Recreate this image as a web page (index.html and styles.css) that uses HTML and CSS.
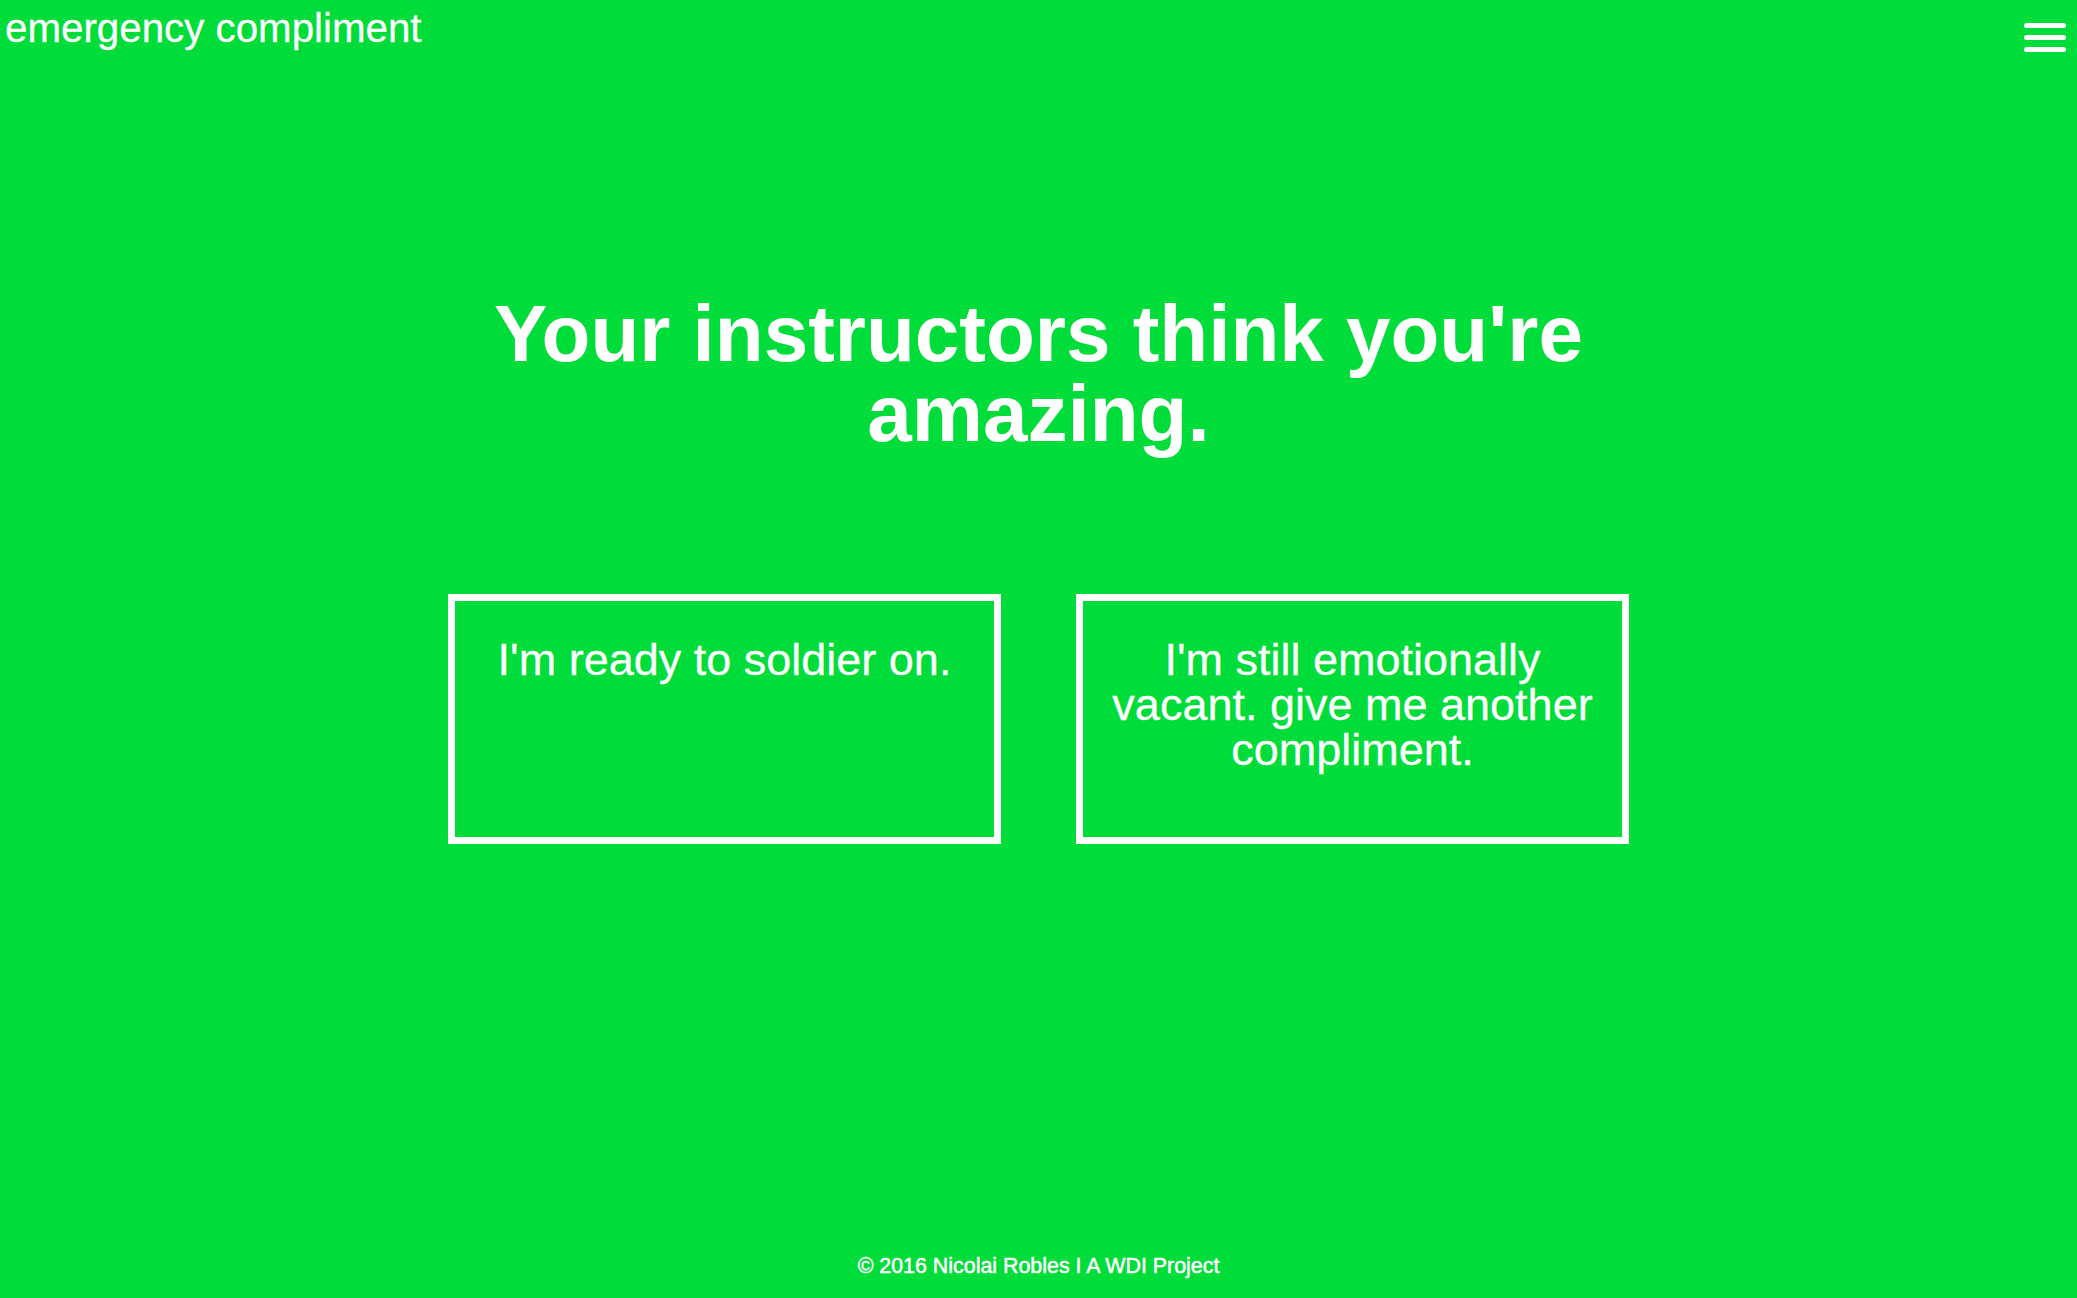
FILE: index.html
```html
<!DOCTYPE html>
<html lang="en">
<head>
<meta charset="utf-8">
<title>emergency compliment</title>
<link rel="stylesheet" href="styles.css">
</head>
<body>
<header class="topbar">
  <div class="brand">emergency compliment</div>
  <div class="menu" aria-label="menu">
    <span class="bar"></span>
    <span class="bar"></span>
    <span class="bar"></span>
  </div>
</header>
<main class="content">
  <h1 class="headline">Your instructors think you're<br>amazing.</h1>
  <div class="choices">
    <button class="choice">I'm ready to soldier on.</button>
    <button class="choice">I'm still emotionally vacant. give me another compliment.</button>
  </div>
</main>
<footer class="footer">© 2016 Nicolai Robles I A WDI Project</footer>
</body>
</html>
```
FILE: styles.css
```css
html, body {
  height: 100%;
}
body {
  margin: 0;
  background: #00dc39;
  color: #ffffff;
  font-family: "Liberation Sans", Arial, Helvetica, sans-serif;
  display: flex;
  flex-direction: column;
  min-height: 100vh;
}
.topbar {
  display: flex;
  justify-content: space-between;
  align-items: flex-start;
  padding: 8px 11px 0 5px;
}
.brand {
  font-size: 40.3px;
  line-height: 42px;
  -webkit-text-stroke: 0.3px #ffffff;
}
.menu {
  margin-top: 15px;
  display: flex;
  flex-direction: column;
  gap: 7px;
  width: 42px;
}
.bar {
  display: block;
  height: 5px;
  background: #ffffff;
  border-radius: 3px;
}
.content {
  flex: 1;
  text-align: center;
}
.headline {
  margin: 242px 0 0;
  font-size: 80px;
  line-height: 80px;
  font-weight: bold;
}
.choices {
  margin-top: 140px;
  display: flex;
  justify-content: center;
  gap: 75px;
}
.choice {
  box-sizing: border-box;
  width: 553px;
  height: 250px;
  border: 7px solid #ffffff;
  background: transparent;
  color: #ffffff;
  font-family: "Liberation Sans", Arial, Helvetica, sans-serif;
  font-size: 45px;
  line-height: 45px;
  padding: 36px 20px 0;
  display: flex;
  align-items: flex-start;
  justify-content: center;
  text-align: center;
  cursor: pointer;
  -webkit-text-stroke: 0.3px #ffffff;
}
.footer {
  text-align: center;
  font-size: 21.4px;
  line-height: 24px;
  padding-bottom: 20px;
  -webkit-text-stroke: 0.5px #ffffff;
}
```
